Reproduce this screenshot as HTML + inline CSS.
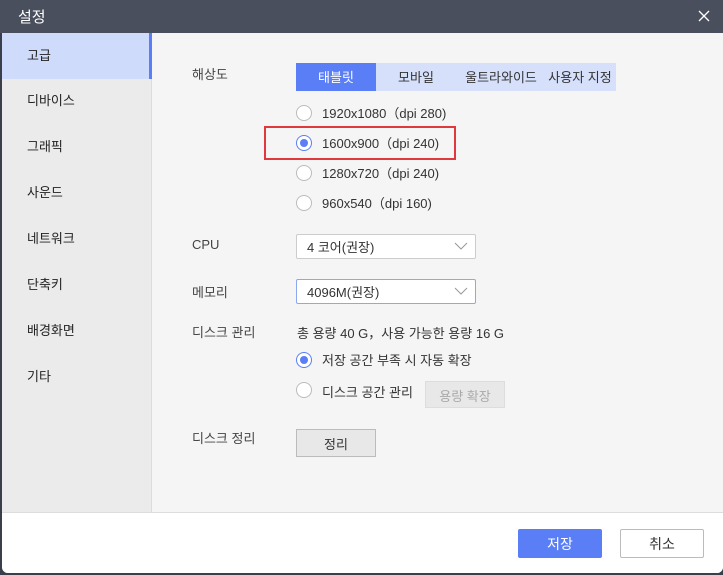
<!DOCTYPE html>
<html><head><meta charset="utf-8"><style>
*{margin:0;padding:0;box-sizing:border-box}
body{width:723px;height:575px;background:#3a3f4c;font-family:"Liberation Sans","Noto Sans CJK KR",sans-serif;font-size:13px;color:#333;position:relative;overflow:hidden}
.a{position:absolute}
.title{left:0;top:0;width:723px;height:33px;background:#4a4f5e;color:#fff;font-size:15px;padding:6px 0 0 18px}
.win{left:2px;top:33px;width:721px;height:540px;background:#f5f5f5;border-radius:0 0 6px 6px;overflow:hidden}
.side{left:0;top:0;width:150px;height:479px;background:#ebebeb;border-right:1px solid #dcdcdc}
.si{position:absolute;left:25px;font-size:13px;color:#222}
.sel{left:0;top:0;width:150px;height:46px;background:#cfdbfb;border-right:3px solid #5a7ef6}
.foot{left:0;top:479px;width:721px;height:61px;background:#fff;border-top:1px solid #ddd}
.lab{font-size:13px;color:#444}
.radio{width:16px;height:16px;border:1px solid #bbb;border-radius:50%;background:#fff}
.radio.on{border-color:#5a7ef6}
.radio.on:after{content:"";position:absolute;left:3px;top:3px;width:8px;height:8px;border-radius:50%;background:#5a7ef6}
.rt{font-size:13px;color:#333}
.selbox{background:#fff;border:1px solid #ccc;border-radius:2px;padding:2px 0 0 10px;font-size:13px}
.btn{background:#e8e8e8;border:1px solid #bbb;text-align:center;font-size:13px;padding-top:4px}
</style></head><body>
<div class="a title">설정</div>
<svg class="a" style="left:698px;top:10px" width="12" height="12"><path d="M1 1L11 11M11 1L1 11" stroke="#fff" stroke-width="1.3"/></svg>
<div class="a win">
 <div class="a side">
  <div class="a sel"></div>
  <div class="si" style="top:12px">고급</div>
  <div class="si" style="top:57px">디바이스</div>
  <div class="si" style="top:103px">그래픽</div>
  <div class="si" style="top:149px">사운드</div>
  <div class="si" style="top:195px">네트워크</div>
  <div class="si" style="top:241px">단축키</div>
  <div class="si" style="top:287px">배경화면</div>
  <div class="si" style="top:333px">기타</div>
 </div>
 <div class="a lab" style="left:190px;top:31px">해상도</div>
 <div class="a" style="left:294px;top:30px;width:320px;height:28px;background:#d6e0fb"></div>
 <div class="a" style="left:294px;top:30px;width:80px;height:28px;background:#5a7ef6;color:#fff;text-align:center;padding-top:4px">태블릿</div>
 <div class="a" style="left:374px;top:34px;width:80px;text-align:center">모바일</div>
 <div class="a" style="left:456px;top:34px;width:86px;text-align:center">울트라와이드</div>
 <div class="a" style="left:540px;top:34px;width:76px;text-align:center">사용자 지정</div>

 <div class="a radio" style="left:294px;top:72px"></div><div class="a rt" style="left:320px;top:70px">1920x1080（dpi 280)</div>
 <div class="a radio on" style="left:294px;top:102px"></div><div class="a rt" style="left:320px;top:100px">1600x900（dpi 240)</div>
 <div class="a" style="left:262px;top:93px;width:192px;height:34px;border:2px solid #e0393d"></div>
 <div class="a radio" style="left:294px;top:132px"></div><div class="a rt" style="left:320px;top:130px">1280x720（dpi 240)</div>
 <div class="a radio" style="left:294px;top:162px"></div><div class="a rt" style="left:320px;top:160px">960x540（dpi 160)</div>

 <div class="a lab" style="left:190px;top:204px">CPU</div>
 <div class="a selbox" style="left:294px;top:201px;width:180px;height:25px">4 코어(권장)</div>
 <svg class="a" style="left:452px;top:208px" width="14" height="10"><path d="M1 2L7 8L13 2" stroke="#999" fill="none"/></svg>
 <div class="a lab" style="left:190px;top:249px">메모리</div>
 <div class="a selbox" style="left:294px;top:246px;width:180px;height:25px;border-color:#8fa6f0">4096M(권장)</div>
 <svg class="a" style="left:452px;top:253px" width="14" height="10"><path d="M1 2L7 8L13 2" stroke="#999" fill="none"/></svg>

 <div class="a lab" style="left:190px;top:289px">디스크 관리</div>
 <div class="a rt" style="left:295px;top:290px">총 용량 40 G，사용 가능한 용량 16 G</div>
 <div class="a radio on" style="left:294px;top:319px"></div><div class="a rt" style="left:320px;top:317px">저장 공간 부족 시 자동 확장</div>
 <div class="a radio" style="left:294px;top:349px"></div><div class="a rt" style="left:320px;top:349px">디스크 공간 관리</div>
 <div class="a btn" style="left:423px;top:348px;width:80px;height:27px;color:#aaa;border-color:#ddd">용량 확장</div>
 <div class="a lab" style="left:190px;top:395px">디스크 정리</div>
 <div class="a btn" style="left:294px;top:396px;width:80px;height:28px">정리</div>

 <div class="a foot">
  <div class="a" style="left:516px;top:16px;width:84px;height:29px;background:#5a7ef6;border-radius:2px;color:#fff;text-align:center;padding-top:5px;font-size:14px">저장</div>
  <div class="a" style="left:618px;top:16px;width:84px;height:29px;background:#fff;border:1px solid #bbb;border-radius:2px;text-align:center;padding-top:4px;font-size:14px">취소</div>
 </div>
</div>
</body></html>
